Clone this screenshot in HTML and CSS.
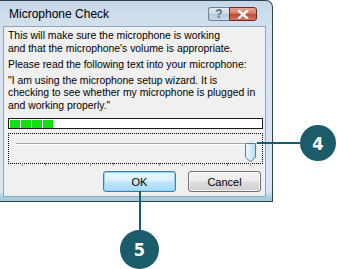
FILE: index.html
```html
<!DOCTYPE html>
<html lang="en">
<head>
    <meta charset="UTF-8">
    <title>Microphone Check</title>
    <link rel="stylesheet" href="styles.css">
</head>
<body>
    <div class="stage">
        <div class="window">
            <div class="titlebar">
                <span class="title">Microphone Check</span>
                <div class="caption-buttons">
                    <span class="cap-btn help">?</span>
                    <span class="cap-btn close">
                        <svg width="12" height="9" viewBox="0 0 12 9">
                            <path d="M2 1 L10 8 M10 1 L2 8" stroke="#fff" stroke-width="2.4" stroke-linecap="square"/>
                        </svg>
                    </span>
                </div>
            </div>

            <div class="client">
                <p class="intro">This will make sure the microphone is working<br>and that the microphone's volume is appropriate.</p>
                <p class="prompt">Please read the following text into your microphone:</p>
                <p class="quote">"I am using the microphone setup wizard. It is<br>checking to see whether my microphone is plugged in<br>and working properly."</p>

                <!-- level meter -->
                <div class="meter">
                    <span class="seg"></span>
                    <span class="seg"></span>
                    <span class="seg"></span>
                    <span class="seg"></span>
                </div>

                <!-- volume slider -->
                <div class="slider">
                    <div class="rail">
                        <div class="groove"></div>
                        <svg class="thumb" width="11" height="20" viewBox="0 0 11 20">
                            <defs>
                                <linearGradient id="thumbFill" x1="0" y1="0" x2="1" y2="0">
                                    <stop offset="0" stop-color="#f4fbff"/>
                                    <stop offset="1" stop-color="#b6dcf2"/>
                                </linearGradient>
                            </defs>
                            <path d="M1.5 0.5 H9.5 Q10.5 0.5 10.5 1.5 V14 L5.5 19 L0.5 14 V1.5 Q0.5 0.5 1.5 0.5 Z" fill="url(#thumbFill)" stroke="#3c7fb1"/>
                        </svg>
                    </div>
                    <div class="ticks">
                        <span></span><span></span><span></span><span></span><span></span><span></span>
                        <span></span><span></span><span></span><span></span><span></span>
                    </div>
                </div>

                <div class="actions">
                    <button class="btn default">OK</button>
                    <button class="btn">Cancel</button>
                </div>
            </div>
        </div>

        <!-- callouts -->
        <div class="leader leader-4"></div>
        <div class="badge badge-4">4</div>
        <div class="leader leader-5"></div>
        <div class="badge badge-5">5</div>
    </div>
</body>
</html>
```

FILE: styles.css
```css
body {
    margin: 0;
    background-color: #fff;
    font-family: 'Liberation Sans', Arial, sans-serif;
}
.stage {
    position: relative;
    width: 337px;
    height: 269px;
    overflow: hidden;
}
.window {
    box-sizing: border-box;
    width: 273px;
    height: 202px;
    display: flex;
    flex-direction: column;
    padding: 0 6px 4px 3px;
    border: 1px solid #2f4356;
    border-left: none;
    border-top-right-radius: 7px;
    background: linear-gradient(to bottom, #c6d7e8 0px, #d6e3ef 30px, #dae6f1 190px, #a9d2e2 196px, #9cc9dc 200px);
}
.titlebar {
    height: 25px;
    display: flex;
    align-items: center;
}
.title {
    padding-left: 6px;
    font-size: 12px;
    color: #000;
}
.caption-buttons {
    margin-left: auto;
    margin-right: 9px;
    margin-top: 1px;
    display: flex;
}
.cap-btn {
    box-sizing: border-box;
    height: 14px;
    display: flex;
    align-items: center;
    justify-content: center;
    border: 1px solid #6d8194;
}
.help {
    width: 21px;
    border-radius: 3px 0 0 3px;
    border-right: none;
    background: linear-gradient(to bottom, #e4ecf4 0%, #c9d7e5 50%, #b3c6d9 51%, #c7d8e8 100%);
    color: #5c6e80;
    font-size: 12px;
    font-weight: bold;
}
.close {
    width: 28px;
    border-radius: 0 3px 3px 0;
    border-color: #6b2a1f;
    background: linear-gradient(to bottom, #e8a593 0%, #d47461 50%, #c2422c 51%, #d9775c 100%);
}
.client {
    flex: 1;
    border: 1px solid #8fa3b6;
    background-color: #f0f0f0;
    padding: 3px 3px 0 4px;
    font-size: 10.4px;
    line-height: 12.5px;
    color: #000;
    white-space: nowrap;
}
.client p {
    margin: 0;
}
.prompt {
    margin-top: 4px !important;
}
.quote {
    margin-top: 3px !important;
}
.meter {
    box-sizing: border-box;
    width: 255px;
    height: 11px;
    margin-top: 6px;
    border: 1px solid #1a1a1a;
    background-color: #fff;
    padding: 1px 0 0 1px;
    display: flex;
    gap: 1px;
}
.seg {
    width: 10px;
    height: 8px;
    background-color: #12e012;
}
.slider {
    box-sizing: border-box;
    width: 255px;
    height: 31px;
    margin-top: 4px;
    border: 1px dotted #000;
    padding: 0 11px 0 13px;
}
.rail {
    position: relative;
    height: 19px;
}
.groove {
    margin: 9px -6px 0 -6px;
    height: 0;
    border-top: 1px solid #a6a6a6;
    border-bottom: 1px solid #fff;
}
.thumb {
    position: absolute;
    right: -5px;
    top: 0;
}
.ticks {
    margin-top: 1px;
    display: flex;
    justify-content: space-between;
}
.ticks span {
    width: 1px;
    height: 3px;
    background-color: #8c8c8c;
}
.actions {
    margin-top: 7px;
    display: flex;
    justify-content: flex-end;
    gap: 12px;
    padding-right: 1px;
}
.btn {
    width: 73px;
    height: 21px;
    padding: 0;
    border: 1px solid #707070;
    border-radius: 3px;
    background: linear-gradient(to bottom, #f2f2f2 0%, #ebebeb 48%, #dddddd 52%, #cfcfcf 100%);
    box-shadow: inset 0 0 0 1px rgba(255, 255, 255, 0.7);
    font-family: 'Liberation Sans', Arial, sans-serif;
    font-size: 11px;
    color: #000;
}
.btn.default {
    border-color: #3c7fb1;
    background: linear-gradient(to bottom, #eaf6fd 0%, #d9f0fc 48%, #bee6fd 52%, #a7d9f5 100%);
    box-shadow: inset 0 0 0 1px #8fd6f8;
}
.leader {
    position: absolute;
    background-color: #1b5b6a;
}
.leader-4 {
    left: 257px;
    top: 142px;
    width: 45px;
    height: 2px;
}
.leader-5 {
    left: 139px;
    top: 191px;
    width: 2px;
    height: 41px;
}
.badge {
    position: absolute;
    border-radius: 50%;
    background-color: #1b5b6a;
    color: #fff;
    font-family: 'DejaVu Sans Condensed', 'DejaVu Sans', sans-serif;
    font-weight: bold;
    font-size: 18px;
    display: flex;
    align-items: center;
    justify-content: center;
}
.badge-4 {
    left: 300px;
    top: 125px;
    width: 36px;
    height: 36px;
}
.badge-5 {
    left: 120px;
    top: 230px;
    width: 39px;
    height: 39px;
}
```
